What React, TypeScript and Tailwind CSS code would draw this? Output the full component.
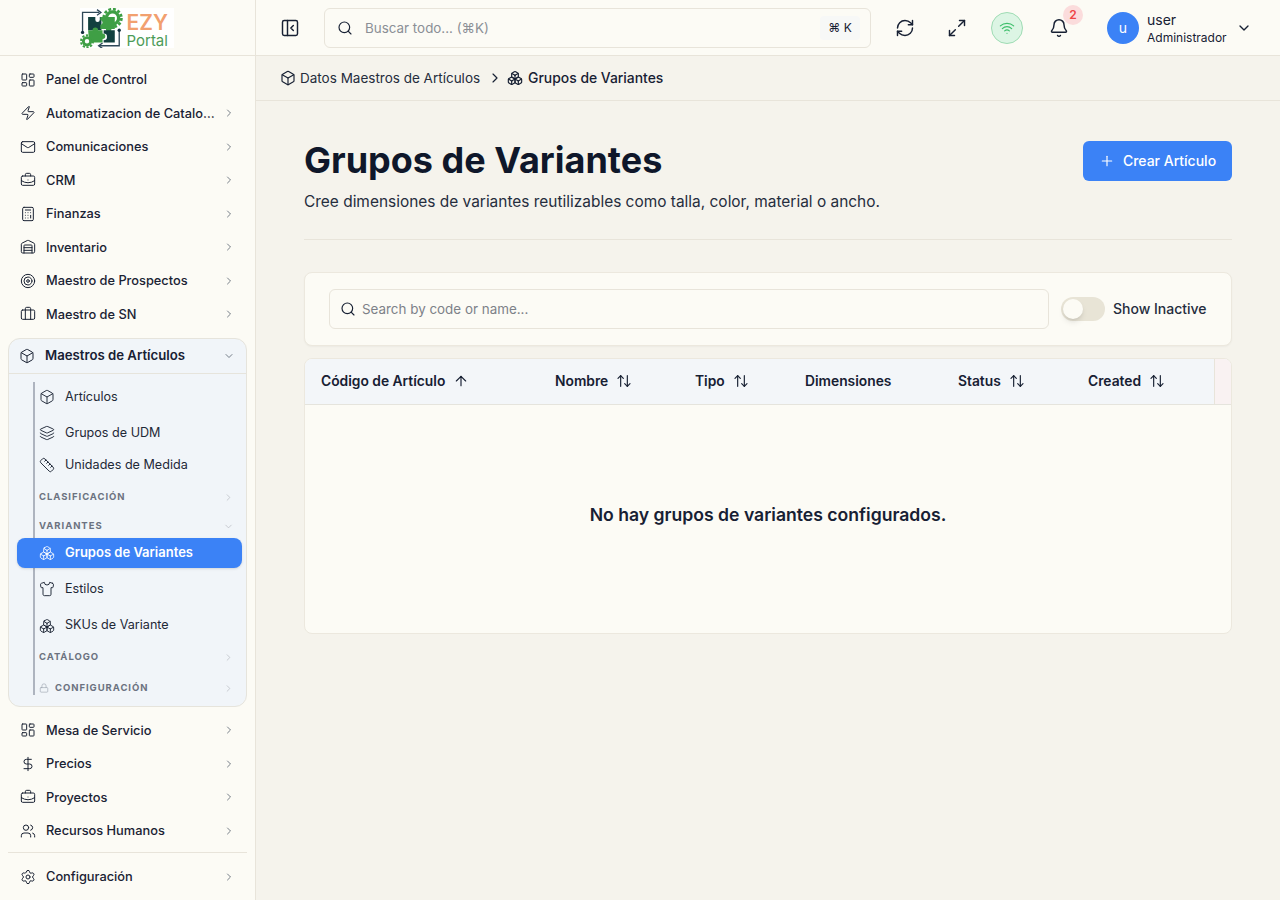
import {
  ArrowUp,
  ArrowUpDown,
  Bell,
  Box,
  Boxes,
  Briefcase,
  BriefcaseBusiness,
  Calculator,
  ChevronDown,
  ChevronRight,
  DollarSign,
  Layers,
  LayoutDashboard,
  Lock,
  Mail,
  Maximize2,
  PanelLeftClose,
  Plus,
  RefreshCw,
  Ruler,
  Search,
  Settings,
  Shirt,
  Target,
  Users,
  Warehouse,
  Wifi,
  Zap,
} from "lucide-react";

const topItems = [
  { label: "Panel de Control", icon: LayoutDashboard, noArrow: true },
  { label: "Automatizacion de Catalogo", icon: Zap },
  { label: "Comunicaciones", icon: Mail },
  { label: "CRM", icon: BriefcaseBusiness },
  { label: "Finanzas", icon: Calculator },
  { label: "Inventario", icon: Warehouse },
  { label: "Maestro de Prospectos", icon: Target },
  { label: "Maestro de SN", icon: Briefcase },
];

const bottomItems = [
  { label: "Mesa de Servicio", icon: LayoutDashboard },
  { label: "Precios", icon: DollarSign },
  { label: "Proyectos", icon: BriefcaseBusiness },
  { label: "Recursos Humanos", icon: Users },
];

const columns = [
  { label: "Código de Artículo", width: "w-[234px]", sort: "up" },
  { label: "Nombre", width: "w-[140px]", sort: "both" },
  { label: "Tipo", width: "w-[110px]", sort: "both" },
  { label: "Dimensiones", width: "w-[153px]", sort: "" },
  { label: "Status", width: "w-[130px]", sort: "both" },
  { label: "Created", width: "w-[126px]", sort: "both" },
];

function NavItem({ label, icon: Icon, noArrow }: { label: string; icon: typeof Box; noArrow?: boolean }) {
  return (
    <div className="flex h-[33.5px] items-center pl-[20px] pr-[21px] text-[12.8px] font-medium text-[#1a2233]">
      <Icon className="h-[16px] w-[16px] shrink-0 text-[#1a2233]" strokeWidth={1.5} />
      <span className="ml-[10px] min-w-0 flex-1 truncate pr-[6px]">{label}</span>
      {!noArrow && <ChevronRight className="ml-[1px] h-[12px] w-[12px] shrink-0 translate-x-[1px] text-[#4b5563]" strokeWidth={1.5} />}
    </div>
  );
}

function SubItem({ label, icon: Icon, height }: { label: string; icon: typeof Box; height: string }) {
  return (
    <div className={`flex items-center pl-[30px] text-[12.6px] text-[#1f2937] ${height}`}>
      <Icon className="h-[16px] w-[16px] shrink-0 text-[#1a2233]" strokeWidth={1.4} />
      <span className="ml-[10px]">{label}</span>
    </div>
  );
}

function SectionLabel({ label, open, lock, height }: { label: string; open?: boolean; lock?: boolean; height: string }) {
  const Arrow = open ? ChevronDown : ChevronRight;
  return (
    <div className={`flex items-center justify-between pl-[30px] pr-[12px] ${height}`}>
      <div className="flex items-center">
        {lock && <Lock className="mr-[6px] h-[10px] w-[10px] text-[#9ca3af]" strokeWidth={1.5} />}
        <span className="text-[9.5px] font-bold tracking-[0.1em] text-[#6b7280]">{label}</span>
      </div>
      <Arrow className="h-[11px] w-[11px] text-[#b4b8bf]" strokeWidth={1.5} />
    </div>
  );
}

function Logo() {
  return (
    <div className="mr-[2px] flex h-[40px] w-[94px] items-center bg-white">
      <svg viewBox="2 1 39 36" className="h-[40px] w-[44px] shrink-0">
        <circle cx="31" cy="10" r="5.5" fill="none" stroke="#3f9f45" strokeWidth="3" />
        <circle cx="31" cy="10" r="8" fill="none" stroke="#3f9f45" strokeWidth="2.4" strokeDasharray="2.6 1.6" />
        <path d="M4 22V5h15" fill="none" stroke="#2f4858" strokeWidth="1.2" />
        <path d="M17 2.500 20.500 5 17 7.500" fill="none" stroke="#2f4858" strokeWidth="1.2" />
        <path d="M37 21v14H19" fill="none" stroke="#2f4858" strokeWidth="1.2" />
        <path d="M22 32.500 18.500 35 22 37.500" fill="none" stroke="#2f4858" strokeWidth="1.2" />
        <circle cx="4" cy="23" r="1.5" fill="#12303f" />
        <circle cx="37" cy="21" r="1.5" fill="#12303f" />
        <path d="M9 9h6.500v2.500a2 2 0 0 0 4 0V9H21v12h-12z" fill="#12403f" />
        <path d="M20 9h13v11h-3a2.500 2.500 0 0 1-5 0h-5v-4a2 2 0 0 0 0-4z" fill="#3f9f45" />
        <path d="M9 21h4a2.500 2.500 0 0 1 5 0h4v3a2.500 2.500 0 0 1 0 5v3H10z" fill="#3f9f45" />
        <path d="M23 21h10v11H23v-2a2.500 2.500 0 0 0 0-6z" fill="#12403f" />
        <circle cx="8" cy="31" r="3.300" fill="#ffffff" stroke="#3f9f45" strokeWidth="2.600" />
        <circle cx="8" cy="31" r="5.400" fill="none" stroke="#3f9f45" strokeWidth="1.800" strokeDasharray="2 1.400" />
      </svg>
      <div className="ml-[3px] mt-[5px] flex flex-col leading-none">
        <span className="text-[21px] font-semibold leading-[20px] text-[#f2a06f]">EZY</span>
        <span className="text-[15px] leading-[15px] text-[#4d9b57]">Portal</span>
      </div>
    </div>
  );
}

function Sidebar() {
  return (
    <aside className="flex h-[900px] w-[256px] shrink-0 flex-col border-r border-[#e8e4da] bg-[#fcfbf5]">
      <div className="flex h-[56px] shrink-0 items-center justify-center border-b border-[#e8e4da]">
        <Logo />
      </div>
      <nav className="flex flex-col pt-[7px]">
        {topItems.map((item) => (
          <NavItem key={item.label} {...item} />
        ))}
      </nav>
      <div className="mx-[8px] mt-[7px] h-[369px] rounded-[12px] border border-[#e6e4dc] bg-[#f1f5f9]">
        <div className="flex h-[35px] items-center border-b border-[#e6e4dc] pl-[10px] pr-[11px]">
          <Box className="h-[16px] w-[16px] text-[#1a2233]" strokeWidth={1.5} />
          <span className="ml-[10px] flex-1 text-[13.2px] font-semibold text-[#172033]">Maestros de Artículos</span>
          <ChevronDown className="h-[12px] w-[12px] text-[#4b5563]" strokeWidth={1.5} />
        </div>
        <div className="relative pt-[5px]">
          <div className="absolute bottom-[8px] left-[24px] top-[8px] w-[2px] bg-[#aeb4bf]" />
          <SubItem label="Artículos" icon={Box} height="h-[36px]" />
          <SubItem label="Grupos de UDM" icon={Layers} height="h-[36px]" />
          <SubItem label="Unidades de Medida" icon={Ruler} height="h-[28px]" />
          <SectionLabel label="CLASIFICACIÓN" height="h-[36px]" />
          <SectionLabel label="VARIANTES" open height="h-[22px]" />
          <div className="relative mx-[8px] mt-[1px] flex h-[30px] w-[225px] items-center rounded-[8px] bg-[#3b82f6] pl-[22px] text-[13px] font-semibold text-white shadow-sm">
            <Boxes className="h-[16px] w-[16px]" strokeWidth={1.25} />
            <span className="ml-[10px]">Grupos de Variantes</span>
          </div>
          <SubItem label="Estilos" icon={Shirt} height="h-[42px]" />
          <SubItem label="SKUs de Variante" icon={Boxes} height="h-[31px]" />
          <SectionLabel label="CATÁLOGO" height="h-[32px]" />
          <SectionLabel label="CONFIGURACIÓN" lock height="h-[30px]" />
        </div>
      </div>
      <nav className="flex flex-col pt-[6.5px]">
        {bottomItems.map((item) => (
          <NavItem key={item.label} {...item} />
        ))}
      </nav>
      <div className="mx-[8px] mt-[4.5px] border-t border-[#e8e4da] pt-[7px]">
        <div className="-mx-[8px]">
          <NavItem label="Configuración" icon={Settings} />
        </div>
      </div>
    </aside>
  );
}

function Header() {
  return (
    <header className="flex h-[56px] shrink-0 items-center border-b border-[#e8e4da] bg-[#fcfbf5] pl-[24px]">
      <PanelLeftClose className="h-[20px] w-[20px] text-[#172033]" strokeWidth={1.75} />
      <div className="ml-[24px] flex h-[40px] w-[547px] items-center rounded-[6px] border border-[#e8e4da] pl-[12px] pr-[10px]">
        <Search className="h-[16px] w-[16px] text-[#172033]" strokeWidth={1.75} />
        <span className="ml-[12px] flex-1 pt-[1px] text-[13.4px] text-[#8b8f96]">Buscar todo... (⌘K)</span>
        <span className="flex h-[24px] w-[40px] items-center justify-center rounded-[4px] bg-[#f7f8f7] text-[12px] text-[#172033]">⌘ K</span>
      </div>
      <RefreshCw className="ml-[24px] h-[20px] w-[20px] text-[#172033]" strokeWidth={1.75} />
      <Maximize2 className="ml-[32px] h-[20px] w-[20px] text-[#172033]" strokeWidth={1.75} />
      <div className="ml-[24px] flex h-[32px] w-[32px] items-center justify-center rounded-full border border-[#9fdcb4] bg-[#dcf5e4]">
        <Wifi className="h-[16px] w-[16px] text-[#3fbf6c]" strokeWidth={1.75} />
      </div>
      <div className="relative ml-[26px] h-[20px] w-[20px]">
        <Bell className="h-[20px] w-[20px] text-[#172033]" strokeWidth={1.75} />
        <span className="absolute -right-[14px] -top-[13px] flex h-[20px] w-[20px] items-center justify-center rounded-full bg-[#fbdcdc] text-[12px] font-semibold text-[#ef4444]">2</span>
      </div>
      <div className="ml-[38px] flex h-[32px] w-[32px] items-center justify-center rounded-full bg-[#3b82f6] text-[14px] text-white">u</div>
      <div className="ml-[8px] flex w-[89px] flex-col pt-[2px]">
        <span className="text-[14px] leading-[18px] text-[#172033]">user</span>
        <span className="text-[12px] leading-[18px] text-[#172033]">Administrador</span>
      </div>
      <ChevronDown className="h-[16px] w-[16px] text-[#172033]" strokeWidth={2} />
    </header>
  );
}

function Breadcrumbs() {
  return (
    <div className="flex h-[45px] shrink-0 items-center border-b border-[#e8e4da] pl-[24px] text-[13.5px] text-[#252d3d]">
      <Box className="h-[16px] w-[16px] text-[#172033]" strokeWidth={1.75} />
      <span className="ml-[4px]">Datos Maestros de Artículos</span>
      <ChevronRight className="ml-[7px] h-[16px] w-[16px] text-[#172033]" strokeWidth={1.75} />
      <Boxes className="ml-[4px] h-[16px] w-[16px] text-[#172033]" strokeWidth={1.75} />
      <span className="ml-[5px] text-[13.9px] font-medium text-[#172033]">Grupos de Variantes</span>
    </div>
  );
}

function Toolbar() {
  return (
    <div className="flex h-[74px] items-center rounded-[8px] border border-[#ece8de] bg-[#fcfbf5] pl-[24px] pr-[24px] shadow-[0_1px_2px_rgba(0,0,0,0.04)]">
      <div className="flex h-[40px] w-[720px] items-center rounded-[6px] border border-[#e8e4da] pl-[10px]">
        <Search className="h-[16px] w-[16px] text-[#172033]" strokeWidth={1.75} />
        <span className="ml-[6px] text-[13.4px] text-[#7d8188]">Search by code or name...</span>
      </div>
      <div className="ml-[12px] flex h-[24px] w-[44px] items-center rounded-full bg-[#e8e4d6] pl-[2px]">
        <div className="h-[20px] w-[20px] rounded-full bg-[#fcfbf5] shadow-md" />
      </div>
      <span className="ml-[8px] pb-[1px] text-[14px] font-medium text-[#252d3d]">Show Inactive</span>
    </div>
  );
}

function Table() {
  return (
    <div className="mt-[12px] h-[276px] overflow-hidden rounded-[8px] border border-[#ece8de] bg-[#fcfbf5]">
      <div className="flex h-[46px] border-b border-[#e5e4dd] bg-[#f3f6f9]">
        {columns.map((c) => (
          <div key={c.label} className={`flex items-center pb-[1px] pl-[16px] text-[13.8px] font-semibold text-[#172033] ${c.width}`}>
            <span>{c.label}</span>
            {c.sort === "up" && <ArrowUp className="ml-[8px] h-[16px] w-[16px]" strokeWidth={1.75} />}
            {c.sort === "both" && <ArrowUpDown className="ml-[8px] h-[16px] w-[16px]" strokeWidth={1.75} />}
          </div>
        ))}
        <div className="ml-auto w-[17px] border-l border-[#e8e4da] bg-[#f9f2f2]" />
      </div>
      <div className="flex h-[220px] items-center justify-center text-[17.6px] font-semibold text-[#172033]">
        No hay grupos de variantes configurados.
      </div>
    </div>
  );
}

export default function App() {
  return (
    <div className="flex h-[900px] w-[1280px] overflow-hidden bg-[#f5f3ec] font-['Inter',sans-serif]">
      <Sidebar />
      <div className="flex min-w-0 flex-1 flex-col">
        <Header />
        <Breadcrumbs />
        <main className="px-[48px] pt-[40px]">
          <div className="flex items-start justify-between border-b border-[#e8e4da] pb-[27px]">
            <div>
              <h1 className="text-[36px] font-bold leading-[38px] text-[#0f172a]">Grupos de Variantes</h1>
              <p className="mt-[12px] text-[15.45px] leading-[21px] text-[#252d3d]">
                Cree dimensiones de variantes reutilizables como talla, color, material o ancho.
              </p>
            </div>
            <button className="flex h-[40px] w-[149px] items-center justify-center rounded-[6px] bg-[#3b82f6] pb-[1px] text-[14px] font-medium text-white">
              <Plus className="mr-[8px] h-[16px] w-[16px]" strokeWidth={1.75} />
              Crear Artículo
            </button>
          </div>
          <div className="mt-[32px]">
            <Toolbar />
            <Table />
          </div>
        </main>
      </div>
    </div>
  );
}
